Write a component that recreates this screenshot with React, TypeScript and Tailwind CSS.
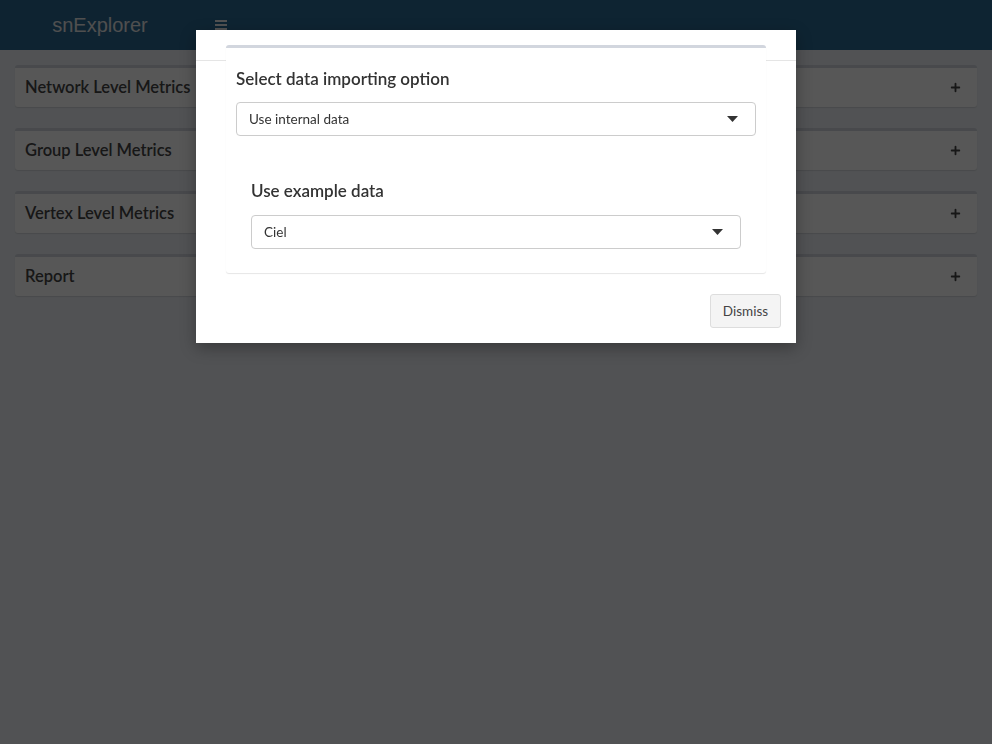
import { Plus } from 'lucide-react';

const font = { fontFamily: 'Lato, "Noto Sans", sans-serif' };

const boxes = ['Network Level Metrics', 'Group Level Metrics', 'Vertex Level Metrics', 'Report'];

function Caret() {
    return (
        <svg width="11" height="6" viewBox="0 0 11 6" className="shrink-0">
            <path d="M0 0h11L5.5 6z" fill="#333" />
        </svg>
    );
}

function SelectBox({ value }: { value: string }) {
    return (
        <div className="flex h-[34px] items-center justify-between rounded-[4px] border border-[#cccccc] bg-white pl-3 pr-[17px] text-[13.5px] text-[#333]">
            <span>{value}</span>
            <Caret />
        </div>
    );
}

export default function App() {
    return (
        <div className="relative min-h-[744px] bg-[#ecf0f5] text-[#333]" style={font}>
            <header className="flex h-[50px] bg-[#2a6a93]">
                <div
                    className="flex w-[200px] items-center justify-center bg-[#296790] text-[20px] text-[#e6e6e6]"
                    style={{ fontFamily: '"Liberation Sans", Arial, sans-serif' }}
                >
                    snExplorer
                </div>
                <div className="flex w-[42px] flex-col items-center justify-center gap-[2px]">
                    <span className="block h-[2px] w-[12px] bg-[#eeeeee]" />
                    <span className="block h-[2px] w-[12px] bg-[#eeeeee]" />
                    <span className="block h-[2px] w-[12px] bg-[#eeeeee]" />
                </div>
            </header>

            <main className="flex flex-col gap-[21px] px-[15px] pt-[15px]">
                {boxes.map((title) => (
                    <div
                        key={title}
                        className="flex h-[42px] items-center justify-between rounded-[3px] border-t-[3px] border-[#d2d6de] bg-white pl-[10px] pr-[15px] shadow-[0_1px_1px_rgba(0,0,0,0.1)]"
                    >
                        <h3 className="text-[16.5px] font-semibold text-[#444]">{title}</h3>
                        <Plus size={13} strokeWidth={3.4} color="#444444" />
                    </div>
                ))}
            </main>

            <div className="fixed inset-0 bg-black/[0.66]" />

            <div className="absolute left-[196px] top-[30px] w-[600px] bg-white shadow-[0_5px_15px_rgba(0,0,0,0.3)]">
                <div className="h-[31px] border-b border-[#e5e5e5]" />
                <div className="px-[30px] -mt-[16px]">
                    <div className="rounded-[3px] border-t-[3px] border-[#d2d6de] bg-white px-[10px] pb-[24px] shadow-[0_1px_1px_rgba(0,0,0,0.1)]">
                        <h3 className="pt-[20px] pb-[13px] text-[17px] font-semibold leading-[21px] text-[#333]">
                            Select data importing option
                        </h3>
                        <SelectBox value="Use internal data" />
                        <div className="px-[15px] pt-[44px]">
                            <h3 className="pb-[14px] text-[17px] font-semibold leading-[21px] text-[#333]">
                                Use example data
                            </h3>
                            <SelectBox value="Ciel" />
                        </div>
                    </div>
                </div>
                <div className="flex justify-end p-[15px] pt-[21px]">
                    <button className="h-[34px] w-[71px] rounded-[3px] border border-[#dddddd] bg-[#f4f4f4] text-[13.5px] text-[#444]">
                        Dismiss
                    </button>
                </div>
            </div>
        </div>
    );
}
